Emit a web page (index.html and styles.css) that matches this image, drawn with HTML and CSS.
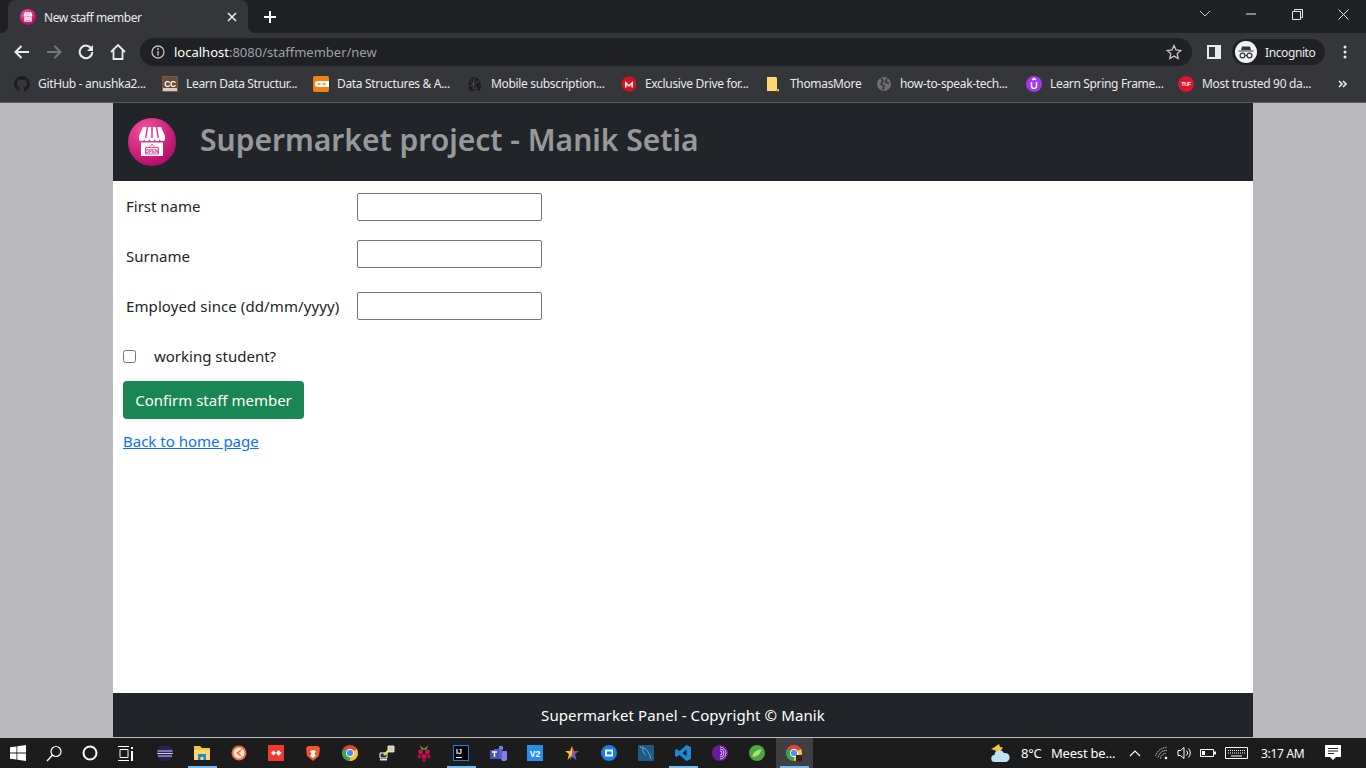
FILE: index.html
```html
<!DOCTYPE html>
<html lang="en">
<head>
    <meta charset="UTF-8">
    <title>New staff member</title>
    <link rel="stylesheet" href="styles.css">
</head>
<body>
    <svg class="defs" width="0" height="0">
        <defs>
            <radialGradient id="pink" cx="0.35" cy="0.25" r="0.9">
                <stop offset="0" stop-color="#f4509f"/>
                <stop offset="1" stop-color="#a90360"/>
            </radialGradient>
            <symbol id="store" viewBox="0 0 48 48">
                <circle cx="24" cy="24" r="24" fill="url(#pink)"/>
                <path d="M15 9h18l4 9v2.500a2.600 2.600 0 0 1-5.200 0 2.600 2.600 0 0 1-5.200 0 2.600 2.600 0 0 1-5.200 0 2.600 2.600 0 0 1-5.200 0 2.600 2.600 0 0 1-5.200 0V18z" fill="#fff"/>
                <path d="M19.500 9l-1.800 11M24 9v11M28.500 9l1.800 11" stroke="#e23a90" stroke-width="1.500"/>
                <path d="M13 24.500h22V38H13z" fill="#fff"/>
                <path d="M17.500 29.500h13v6.500h-13z" fill="none" stroke="#d8277f" stroke-width=".8"/>
                <path d="M24 26l-3 3.500M24 26l3 3.500" stroke="#d8277f" stroke-width=".7"/>
                <text x="24" y="34.600" text-anchor="middle" class="logo-text" fill="#d8277f">OPEN</text>
            </symbol>
            <symbol id="chrome" viewBox="0 0 16 16">
                <circle cx="8" cy="8" r="8" fill="#e0463a"/>
                <path d="M8 8L8 16A8 8 0 0 0 14.900 4z" fill="#f8c52e"/>
                <path d="M8 8L1.100 4A8 8 0 0 0 8 16z" fill="#35a654"/>
                <circle cx="8" cy="8" r="3.700" fill="#4a8df0" stroke="#fff"/>
            </symbol>
        </defs>
    </svg>

    <div class="tabstrip">
        <div class="tab">
            <svg class="tab-icon" width="16" height="16"><use href="#store"/></svg>
            <span class="tab-title">New staff member</span>
            <svg class="tab-close" width="10" height="10" viewBox="0 0 10 10"><path d="M1 1l8 8M9 1l-8 8" stroke="#e8eaed" stroke-width="1.600"/></svg>
        </div>
        <svg class="new-tab" width="12" height="12" viewBox="0 0 12 12"><path d="M6 0v12M0 6h12" stroke="#fff" stroke-width="2"/></svg>
        <div class="window-controls">
            <span class="win-btn"><svg width="12" height="8" viewBox="0 0 12 8"><path d="M1 1l5 5 5-5" fill="none" stroke="#c4c7c5" stroke-width="1"/></svg></span>
            <span class="win-btn"><svg width="10" height="2" viewBox="0 0 10 2"><path d="M0 1h10" stroke="#e8eaed" stroke-width="1"/></svg></span>
            <span class="win-btn"><svg width="11" height="11" viewBox="0 0 11 11"><path d="M.5 2.500h8v8h-8zM2.500 2.500v-2h8v8h-2" fill="none" stroke="#e8eaed" stroke-width="1"/></svg></span>
            <span class="win-btn"><svg width="11" height="11" viewBox="0 0 11 11"><path d="M.5.5l10 10M10.500.5l-10 10" stroke="#e8eaed" stroke-width="1"/></svg></span>
        </div>
    </div>

    <div class="toolbar">
        <span class="nav-btn"><svg width="16" height="14" viewBox="0 0 16 14"><path d="M15 7H2M7.500 1L1.500 7l6 6" fill="none" stroke="#e8eaed" stroke-width="2"/></svg></span>
        <span class="nav-btn"><svg width="16" height="14" viewBox="0 0 16 14"><path d="M1 7h13M8.500 1l6 6-6 6" fill="none" stroke="#75777a" stroke-width="2"/></svg></span>
        <span class="nav-btn"><svg width="16" height="16" viewBox="0 0 16 16"><path d="M13.600 5A6.300 6.300 0 1 0 14.300 8" fill="none" stroke="#e8eaed" stroke-width="2"/><path d="M15 1v6H9z" fill="#e8eaed"/></svg></span>
        <span class="nav-btn"><svg width="16" height="16" viewBox="0 0 16 16"><path d="M1 8l7-7 7 7M3.500 6.500V15h9V6.500" fill="none" stroke="#e8eaed" stroke-width="1.800"/></svg></span>
        <div class="omnibox">
            <svg class="info" width="14" height="14" viewBox="0 0 14 14"><circle cx="7" cy="7" r="6" fill="none" stroke="#bdc1c6" stroke-width="1.300"/><path d="M7 6v4.500" stroke="#bdc1c6" stroke-width="1.400"/><circle cx="7" cy="4" r=".9" fill="#bdc1c6"/></svg>
            <span class="url"><b class="host">localhost</b>:8080/staffmember/new</span>
            <svg class="star" width="16" height="16" viewBox="0 0 16 16"><path d="M8 1.500l2 4.500 4.800.5-3.600 3.200 1 4.800L8 12.100l-4.200 2.400 1-4.800L1.200 6.500 6 6z" fill="none" stroke="#c4c7c5" stroke-width="1.300"/></svg>
        </div>
        <svg class="side-panel" width="14" height="14" viewBox="0 0 14 14"><path d="M0 0h14v14H0z" fill="#e8eaed"/><path d="M2 2h6v10H2z" fill="#35363a"/></svg>
        <div class="profile">
            <svg width="22" height="22" viewBox="0 0 22 22"><circle cx="11" cy="11" r="11" fill="#f1f3f4"/><path d="M7 5.500h8l1 3.500H6zM3.500 9.500h15v1h-15z" fill="#35363a"/><circle cx="7.500" cy="14.500" r="2.400" fill="none" stroke="#35363a" stroke-width="1.200"/><circle cx="14.500" cy="14.500" r="2.400" fill="none" stroke="#35363a" stroke-width="1.200"/><path d="M10 14.500h2" stroke="#35363a"/></svg>
            <span>Incognito</span>
        </div>
        <svg class="menu-dots" width="4" height="14" viewBox="0 0 4 14"><circle cx="2" cy="2" r="1.500" fill="#e8eaed"/><circle cx="2" cy="7" r="1.500" fill="#e8eaed"/><circle cx="2" cy="12" r="1.500" fill="#e8eaed"/></svg>
    </div>

    <div class="bookmarks">
        <a class="bookmark"><svg width="16" height="16" viewBox="0 0 16 16"><path d="M8 0a8 8 0 0 0-2.500 15.600c.4.100.5-.2.500-.4v-1.400c-2.200.5-2.700-1-2.700-1-.4-.9-.9-1.200-.9-1.200-.7-.5.100-.5.100-.5.800.1 1.200.8 1.200.8.700 1.200 1.900.9 2.300.7.100-.5.300-.9.500-1.100-1.800-.2-3.600-.9-3.600-4 0-.9.300-1.600.8-2.100-.1-.2-.4-1 .1-2.100 0 0 .7-.2 2.200.8a7.600 7.600 0 0 1 4 0c1.500-1 2.200-.8 2.200-.8.400 1.100.2 1.900.1 2.100.5.600.8 1.300.8 2.100 0 3.100-1.900 3.700-3.700 3.900.3.300.6.800.6 1.500v2.200c0 .2.100.5.600.4A8 8 0 0 0 8 0z" fill="#1c1d20"/></svg><span>GitHub - anushka2...</span></a>
        <a class="bookmark"><svg width="16" height="16" viewBox="0 0 16 16"><path d="M0 0h16v16H0z" fill="#7a5c46"/><path d="M1 1h14v14H1z" fill="#6b4d38"/><path d="M1 12h14v3H1z" fill="#d8cdc2"/><text x="8" y="10.500" text-anchor="middle" class="icon-text icon-text-big" fill="#fff">CC</text></svg><span>Learn Data Structur...</span></a>
        <a class="bookmark"><svg width="16" height="16" viewBox="0 0 16 16"><rect width="16" height="16" rx="2" fill="#f0820f"/><path d="M16 5H5a3 3 0 0 0 0 6h11z" fill="#fff"/><path d="M4.500 8h3M9.500 8h3" stroke="#f0820f" stroke-width="1.400"/></svg><span>Data Structures &amp; A...</span></a>
        <a class="bookmark"><svg width="16" height="16" viewBox="0 0 16 16"><path d="M3 15c-2-3-2-8 0-11l3-3 4 1 3 3 1 4-1 6-3-1-2-3-1 4z" fill="#1d1e21"/><path d="M4 5l6 8M7 2l-1 11M3 10l9-5" stroke="#55565a" stroke-width=".7"/></svg><span>Mobile subscription...</span></a>
        <a class="bookmark"><svg width="16" height="16" viewBox="0 0 16 16"><circle cx="8" cy="8" r="7.500" fill="#d9121f"/><path d="M4 11.500V5l4 4 4-4v6.500h-1.600V8.500L8 11 5.600 8.500v3z" fill="#fff"/></svg><span>Exclusive Drive for...</span></a>
        <a class="bookmark bookmark-folder"><svg width="14" height="16" viewBox="0 0 14 16"><path d="M1 1h9l1 1v11h2v2H1z" fill="#fbd872"/><path d="M11 13v2h2" fill="none" stroke="#b8973f"/></svg><span>ThomasMore</span></a>
        <a class="bookmark"><svg width="16" height="16" viewBox="0 0 16 16"><circle cx="8" cy="8" r="7" fill="#6d6e71"/><path d="M5 2l2 3-2 3 3 2-1 4M11 2.500L9.500 6l3.500 1.500" fill="none" stroke="#35363a" stroke-width="1.600"/></svg><span>how-to-speak-tech...</span></a>
        <a class="bookmark"><svg width="16" height="16" viewBox="0 0 16 16"><circle cx="8" cy="8" r="8" fill="#a435f0"/><path d="M5.500 6v4a2.500 2.500 0 0 0 5 0V6M6 3.800l2-1.300 2 1.300" fill="none" stroke="#fff" stroke-width="1.500"/></svg><span>Learn Spring Frame...</span></a>
        <a class="bookmark"><svg width="16" height="16" viewBox="0 0 16 16"><circle cx="8" cy="8" r="8" fill="#dd1332"/><text x="8" y="10" text-anchor="middle" class="icon-text icon-text-tiny" fill="#fff">TUF</text></svg><span>Most trusted 90 da...</span></a>
        <svg class="more" width="9" height="8" viewBox="0 0 9 8"><path d="M1 1l3 3-3 3M5 1l3 3-3 3" fill="none" stroke="#e8eaed" stroke-width="1.600"/></svg>
    </div>

    <div class="page">
        <div class="container">
            <header class="site-header">
                <svg width="48" height="48"><use href="#store"/></svg>
                <span class="brand">Supermarket project - Manik Setia</span>
            </header>
            <form class="staff-form" onsubmit="event.preventDefault();">
                <div class="field field-first">
                    <label for="firstName">First name</label>
                    <input type="text" id="firstName">
                </div>
                <div class="field field-surname">
                    <label for="surname">Surname</label>
                    <input type="text" id="surname">
                </div>
                <div class="field field-since">
                    <label for="since">Employed since (dd/mm/yyyy)</label>
                    <input type="text" id="since">
                </div>
                <div class="check-row">
                    <input type="checkbox" id="working">
                    <label for="working">working student?</label>
                </div>
                <button type="submit" class="btn-confirm">Confirm staff member</button>
                <a class="back-link" href="#">Back to home page</a>
            </form>
            <footer class="site-footer">Supermarket Panel - Copyright © Manik</footer>
        </div>
    </div>

    <div class="taskbar">
        <div class="shell-icons">
            <span class="shell-icon"><svg width="16" height="16" viewBox="0 0 16 16"><path d="M0 2.300l6.500-.9v6.200H0zM7.300 1.300L16 0v7.600H7.300zM0 8.400h6.500v6.200L0 13.700zM7.300 8.400H16V16l-8.700-1.200z" fill="#fff"/></svg></span>
            <span class="shell-icon"><svg width="16" height="17" viewBox="0 0 16 17"><circle cx="10" cy="6.500" r="5" fill="none" stroke="#fff" stroke-width="1.200"/><path d="M6.500 10L1 16" stroke="#fff" stroke-width="1.400"/></svg></span>
            <span class="shell-icon"><svg width="16" height="16" viewBox="0 0 16 16"><circle cx="8" cy="8" r="6.500" fill="none" stroke="#fff" stroke-width="2"/></svg></span>
            <span class="shell-icon"><svg width="16" height="15" viewBox="0 0 16 15"><path d="M0 .5h11M0 14.500h11M2 3.500h8v8H2z" fill="none" stroke="#fff" stroke-width="1"/><path d="M14 1v2M14 5v10" stroke="#fff" stroke-width="2"/></svg></span>
        </div>
        <div class="pinned">
            <span class="app"><svg width="16" height="16" viewBox="0 0 16 16"><circle cx="8" cy="8" r="8" fill="#2c2255"/><path d="M.5 6h15M.2 8.500h15.600M1 11h14" stroke="#d4d2e6" stroke-width="1"/></svg></span>
            <span class="app app-open"><svg width="16" height="14" viewBox="0 0 16 14"><path d="M0 0h6l2 2h8v12H0z" fill="#f6c343"/><path d="M0 4h16v10H0z" fill="#fbd66c"/><path d="M4 8h8v6H9.500v-3h-3v3H4z" fill="#1e88d8"/></svg></span>
            <span class="app"><svg width="16" height="16" viewBox="0 0 16 16"><circle cx="8" cy="8" r="7.500" fill="#f16a38"/><circle cx="8" cy="8" r="5.500" fill="#fde4d8"/><path d="M12 3L5 8l7 5-4-5z" fill="#f16a38"/></svg></span>
            <span class="app"><svg width="16" height="16" viewBox="0 0 16 16"><path d="M0 0h16v16H0z" fill="#f0392f"/><path d="M5.500 5.500L8 8 5.500 10.500 3 8zM10.500 5L13.500 8 10.500 11 8 8z" fill="#fff"/></svg></span>
            <span class="app"><svg width="14" height="16" viewBox="0 0 14 16"><path d="M2 1h10l2 2-1 8-6 5-6-5-1-8z" fill="#f0562b"/><path d="M4 6l3-1 3 1-1.500 3L10 11l-3 2-3-2 1.500-2z" fill="#fff"/></svg></span>
            <span class="app"><svg width="16" height="16"><use href="#chrome"/></svg></span>
            <span class="app"><svg width="16" height="16" viewBox="0 0 16 16"><path d="M9 1h6v6H9z" fill="#c8c9cc" stroke="#fff" stroke-width=".8"/><path d="M1 8h7v5H1z" fill="#23324a" stroke="#fff"/><path d="M1 14h7v1.500H1z" fill="#e6e6e6"/><path d="M11 4L5 10" stroke="#f3e23b" stroke-width="2.200"/></svg></span>
            <span class="app"><svg width="16" height="18" viewBox="0 0 14 16"><circle cx="4" cy="7" r="2.200" fill="#c7124f"/><circle cx="10" cy="7" r="2.200" fill="#c7124f"/><circle cx="7" cy="11" r="2.200" fill="#c7124f"/><circle cx="3" cy="11" r="1.800" fill="#a50f42"/><circle cx="11" cy="11" r="1.800" fill="#a50f42"/><circle cx="7" cy="14.300" r="1.700" fill="#a50f42"/><path d="M3 1l4 3 4-3-2 4H5z" fill="#5c9a3a"/></svg></span>
            <span class="app app-open"><svg width="16" height="16" viewBox="0 0 16 16"><path d="M0 0h16v16H0z" fill="#1481f0"/><path d="M1 1h14v14H1z" fill="#000"/><path d="M3 12h6v1H3z" fill="#fff"/><text x="3" y="9" class="icon-text" fill="#fff">IJ</text></svg></span>
            <span class="app"><svg width="17" height="16" viewBox="0 0 17 16"><circle cx="11" cy="3" r="2.200" fill="#7b83eb"/><path d="M9 6h8v6a3 3 0 0 1-6 2z" fill="#7b83eb"/><path d="M4 4h8v10H6a2 2 0 0 1-2-2z" fill="#5b5fc7"/><path d="M0 5h9v9H0z" fill="#4b53bc"/><path d="M2 7h5M4.500 7v5" stroke="#fff" stroke-width="1.400"/></svg></span>
            <span class="app"><svg width="16" height="16" viewBox="0 0 16 16"><rect width="16" height="16" fill="#2b8eea"/><text x="8" y="11.500" text-anchor="middle" class="icon-text icon-text-big" fill="#fff">V2</text></svg></span>
            <span class="app"><svg width="16" height="16" viewBox="0 0 16 16"><path d="M8 1l2 5h5l-4 3 1.500 6L8 12l-2 3z" fill="#7a55c5"/><path d="M8 1L6 6H1l4 3-1.500 6L8 10z" fill="#f8c52e"/><path d="M8 1l2 5-2 4z" fill="#e4473a"/></svg></span>
            <span class="app"><svg width="16" height="16" viewBox="0 0 16 16"><circle cx="8" cy="8" r="8" fill="#1a7fe3"/><path d="M4 4.500h8v7H4z" fill="#fff"/><path d="M6 6.500h4.500v3H6z" fill="#1a7fe3"/></svg></span>
            <span class="app"><svg width="16" height="16" viewBox="0 0 16 16"><rect width="16" height="16" rx="1" fill="#1f5c85"/><path d="M2 2c5 0 9 4 11 12M5 3c-1 3 1 6 3 7" fill="none" stroke="#8bb6cf" stroke-width=".8"/></svg></span>
            <span class="app app-open"><svg width="16" height="16" viewBox="0 0 16 16"><path d="M11.500 0L16 2v12l-4.500 2-7-6L1.700 12 0 11V5l1.700-1 2.800 2zM11.500 4.500L7.500 8l4 3.500z" fill="#1e88d8"/></svg></span>
            <span class="app"><svg width="16" height="16" viewBox="0 0 16 16"><circle cx="8" cy="8" r="8" fill="#6a1b9a"/><path d="M8 4a4 4 0 0 1 0 8M8 2a6 6 0 0 1 0 12M8 6a2 2 0 0 1 0 4" fill="none" stroke="#e6c9f2" stroke-width=".9"/></svg></span>
            <span class="app"><svg width="16" height="16" viewBox="0 0 16 16"><circle cx="8" cy="8" r="8" fill="#4da53c"/><path d="M3.500 12c0-5 4-7 9-8-1 5-4 8-9 8z" fill="#a5dd8c"/></svg></span>
            <span class="app app-current"><svg width="16" height="16" viewBox="0 0 16 16"><use href="#chrome"/><path d="M10 10h6v6h-6z" fill="#3b1a2c"/></svg></span>
        </div>
        <div class="tray">
            <svg class="weather" width="22" height="20" viewBox="0 0 22 20"><path d="M10 1l1 3 3 .5-2 3-4 1-3-1.500-3-1 3-1.500z" fill="#f8c52e"/><path d="M6 19a3.500 3.500 0 0 1-.5-7A5 5 0 0 1 15 10a4.500 4.500 0 0 1 2 9z" fill="#bfe0f5"/></svg>
            <span class="temp">8°C</span>
            <span class="news">Meest be...</span>
            <svg class="tray-chevron" width="12" height="7" viewBox="0 0 12 7"><path d="M1 6l5-5 5 5" fill="none" stroke="#fff" stroke-width="1.100"/></svg>
            <svg class="tray-wifi" width="13" height="13" viewBox="0 0 13 13"><path d="M.5 9A12 12 0 0 1 12 .5M3 10.500A8.500 8.500 0 0 1 12 3.500M5.500 11.500A5.500 5.500 0 0 1 11 6.500" fill="none" stroke="#ddd" stroke-width=".9" stroke-dasharray="1.500 .7"/><circle cx="11" cy="11" r="1.300" fill="#fff"/></svg>
            <svg class="tray-sound" width="16" height="14" viewBox="0 0 16 14"><path d="M1 4.500h2.500L7 1.500v11l-3.500-3H1z" fill="none" stroke="#fff"/><path d="M9.500 4.500a3.500 3.500 0 0 1 0 5M11.500 2.500a6.500 6.500 0 0 1 0 9" fill="none" stroke="#fff"/></svg>
            <svg class="tray-battery" width="16" height="10" viewBox="0 0 16 10"><path d="M.5 1.500h13v7H.5z" fill="none" stroke="#fff"/><path d="M2 3h3v4H2z" fill="#fff"/><path d="M14 3.500h2v3h-2z" fill="#fff"/></svg>
            <svg class="tray-keyboard" width="23" height="12" viewBox="0 0 23 12"><path d="M.5.500h22v11H.5z" fill="none" stroke="#fff"/><path d="M3 3.500h17M3 6h17" stroke="#fff" stroke-dasharray="1 1"/><path d="M6 9h11" stroke="#fff"/></svg>
            <span class="clock">3:17 AM</span>
            <svg class="notify" width="16" height="16" viewBox="0 0 16 16"><path d="M0 0h16v12h-5l-3 3-3-3H0z" fill="#fff"/><path d="M3 3.500h10M3 6h10M3 8.500h6" stroke="#222" stroke-width="1"/></svg>
        </div>
    </div>
</body>
</html>
```

FILE: styles.css
```css
* {
    box-sizing: border-box;
}
body {
    margin: 0;
    height: 100vh;
    display: flex;
    flex-direction: column;
    overflow: hidden;
    font-family: "Noto Sans", "Open Sans", sans-serif;
    background-color: #bab9be;
}
.defs {
    display: block;
    height: 0;
}

/* browser chrome */
.tabstrip {
    height: 33px;
    flex-shrink: 0;
    display: flex;
    align-items: flex-end;
    padding-left: 8px;
    background-color: #202124;
}
.tab {
    position: relative;
    width: 240px;
    height: 33px;
    display: flex;
    align-items: center;
    padding: 1px 11px 0 12px;
    border-radius: 8px 8px 0 0;
    background-color: #35363a;
}
.tab::before,
.tab::after {
    content: "";
    position: absolute;
    bottom: 0;
    width: 8px;
    height: 8px;
}
.tab::before {
    left: -8px;
    background: radial-gradient(circle at 0 0, #202124 8px, #35363a 8.5px);
}
.tab::after {
    right: -8px;
    background: radial-gradient(circle at 100% 0, #202124 8px, #35363a 8.5px);
}
.tab-title {
    flex: 1;
    margin-left: 8px;
    font-size: 12px;
    letter-spacing: -0.45px;
    color: #e8eaed;
}
.new-tab {
    margin: 0 0 10px 16px;
}
.window-controls {
    margin-left: auto;
    align-self: flex-start;
    display: flex;
}
.win-btn {
    width: 46px;
    height: 28px;
    display: flex;
    align-items: center;
    justify-content: center;
}
.toolbar {
    height: 34px;
    flex-shrink: 0;
    display: flex;
    align-items: center;
    padding: 4px 0 0 6px;
    background-color: #35363a;
}
.nav-btn {
    width: 32px;
    height: 28px;
    display: flex;
    align-items: center;
    justify-content: center;
}
.omnibox {
    width: 1052px;
    height: 28px;
    margin-left: 6px;
    display: flex;
    align-items: center;
    padding: 0 10px 0 11px;
    border-radius: 14px;
    background-color: #202124;
}
.url {
    flex: 1;
    margin-left: 9px;
    font-size: 13px;
    color: #9aa0a6;
}
.host {
    font-weight: 400;
    color: #fff;
}
.side-panel {
    margin-left: 15px;
}
.profile {
    width: 93px;
    height: 26px;
    margin-left: 11px;
    display: flex;
    align-items: center;
    gap: 8px;
    padding-left: 3px;
    border-radius: 13px;
    font-size: 12px;
    letter-spacing: -0.4px;
    color: #e8eaed;
    background-color: #202124;
}
.menu-dots {
    margin-left: 18px;
}
.bookmarks {
    height: 36px;
    flex-shrink: 0;
    display: grid;
    grid-template-columns: 148px 151px 154px 154px 145px 110px 150px 152px 1fr auto;
    align-items: center;
    padding: 0 0 2px 14px;
    border-bottom: 1px solid #5a5b5e;
    background-color: #35363a;
}
.bookmark {
    display: flex;
    align-items: center;
    gap: 8px;
    font-size: 12px;
    letter-spacing: -0.33px;
    white-space: nowrap;
    color: #e8eaed;
}
.bookmark-folder {
    gap: 10px;
}
.more {
    margin-right: 19px;
}
.icon-text {
    font-family: "Liberation Sans", sans-serif;
    font-size: 7px;
    font-weight: 700;
}
.icon-text-big {
    font-size: 8.5px;
}
.icon-text-tiny {
    font-size: 5.5px;
}
.logo-text {
    font-family: "Liberation Sans", sans-serif;
    font-size: 4.5px;
    font-weight: 700;
}

/* the page itself */
.page {
    flex: 1;
    min-height: 0;
    display: flex;
    justify-content: center;
    padding-bottom: 1px;
}
.container {
    width: 1140px;
    display: flex;
    flex-direction: column;
    background-color: #fff;
}
.site-header {
    height: 78px;
    flex-shrink: 0;
    display: flex;
    align-items: center;
    gap: 24px;
    padding: 0 15px;
    background-color: #212529;
}
.brand {
    margin-bottom: 6px;
    font-size: 30px;
    font-weight: 600;
    color: rgba(255, 255, 255, 0.55);
}
.staff-form {
    flex: 1;
    padding: 12px 0 0 10px;
    font-size: 15px;
    color: #212529;
}
.field {
    display: flex;
    align-items: flex-start;
}
.field label {
    width: 234px;
    padding-left: 3px;
    line-height: 24px;
}
.field input {
    width: 185px;
    height: 28px;
    padding: 1px 2px;
    border: 1px solid #767676;
    border-radius: 2px;
}
.field-first {
    height: 47px;
}
.field-first label {
    margin-top: 1px;
}
.field-surname {
    height: 52px;
}
.field-surname label {
    margin-top: 4px;
}
.field-since {
    height: 50px;
}
.field-since label {
    margin-top: 2px;
    letter-spacing: 0.1px;
}
.check-row {
    display: flex;
    align-items: center;
    height: 24px;
    margin-top: 2px;
}
.check-row input {
    width: 13px;
    height: 13px;
    margin: 0;
}
.check-row label {
    margin-left: 18px;
}
.btn-confirm {
    display: block;
    width: 181px;
    height: 38px;
    margin-top: 13px;
    padding: 0;
    border: none;
    border-radius: 4px;
    font-family: inherit;
    font-size: 15px;
    color: #fff;
    background-color: #198754;
    cursor: pointer;
}
.back-link {
    display: block;
    margin-top: 10px;
    line-height: 24px;
    color: #0d6efd;
}
.site-footer {
    height: 44px;
    flex-shrink: 0;
    display: flex;
    align-items: center;
    justify-content: center;
    font-size: 15px;
    letter-spacing: 0.1px;
    color: #fff;
    background-color: #212529;
}

/* windows taskbar */
.taskbar {
    height: 30px;
    flex-shrink: 0;
    display: flex;
    align-items: center;
    background-color: #1c1c1c;
}
.shell-icons,
.pinned {
    display: flex;
    height: 100%;
}
.shell-icon {
    width: 36px;
    display: flex;
    align-items: center;
    justify-content: center;
}
.pinned {
    margin-left: 2.5px;
}
.app {
    position: relative;
    width: 37px;
    display: flex;
    align-items: center;
    justify-content: center;
}
.app-open::after,
.app-current::after {
    content: "";
    position: absolute;
    bottom: 0;
    left: 4px;
    right: 4px;
    height: 2px;
    background-color: #76b9ed;
}
.app-current {
    background-color: #3f3f3f;
}
.tray {
    margin-left: auto;
    height: 100%;
    display: flex;
    align-items: center;
    color: #fff;
    white-space: nowrap;
}
.weather {
    margin-right: 10px;
}
.temp {
    width: 30px;
    font-size: 13px;
    letter-spacing: -0.2px;
}
.news {
    width: 78px;
    font-size: 13px;
    letter-spacing: -0.2px;
}
.tray-wifi {
    margin-left: 14px;
}
.tray-sound {
    margin-left: 9px;
}
.tray-battery {
    margin-left: 7px;
}
.tray-keyboard {
    margin-left: 9px;
}
.clock {
    margin-left: 13px;
    width: 64px;
    font-size: 12px;
    letter-spacing: -0.3px;
}
.notify {
    margin-right: 25px;
}
```
